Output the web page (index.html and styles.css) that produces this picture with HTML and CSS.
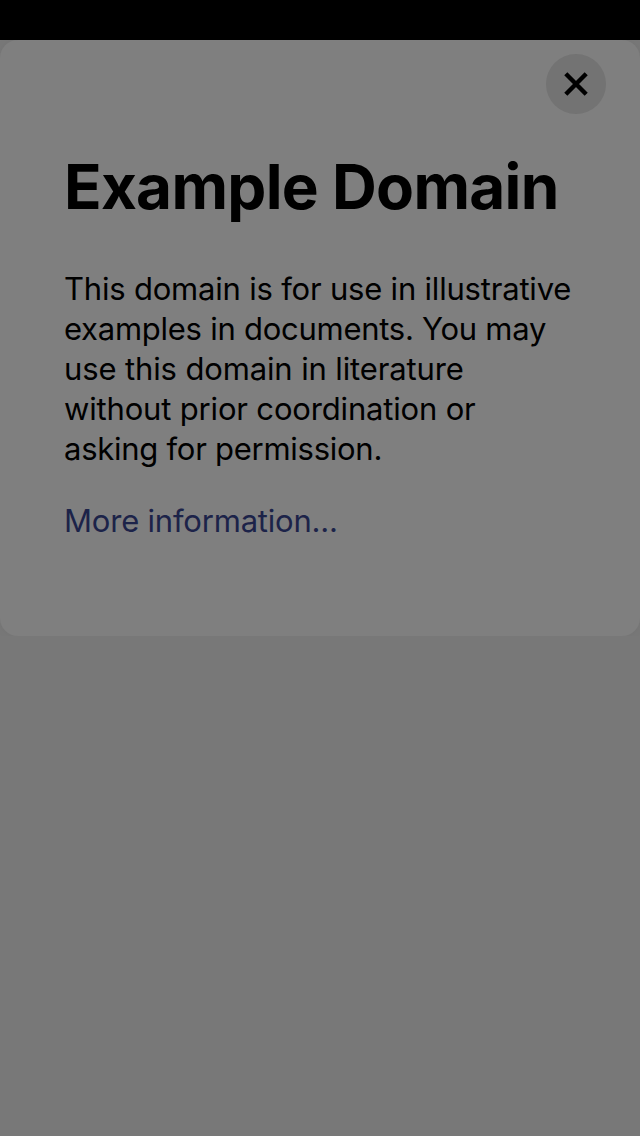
FILE: index.html
```html
<!DOCTYPE html>
<html lang="en">
<head>
<meta charset="utf-8">
<title>Example Domain</title>
<link rel="stylesheet" href="styles.css">
</head>
<body>
<div class="status-bar"></div>
<main class="card">
  <button class="close" aria-label="Close"><svg viewBox="0 0 60 60" width="60" height="60"><path d="M19.8 19.8 40.2 40.2M40.2 19.8 19.8 40.2"/></svg></button>
  <h1 class="title">Example Domain</h1>
  <p class="text"><span class="l1">This domain is for use in illustrative</span><br><span class="l2">examples in documents. You may</span><br><span class="l3">use this domain in literature</span><br><span class="l4">without prior coordination or</span><br><span class="l5">asking for permission.</span></p>
  <a class="more" href="#">More information...</a>
</main>
</body>
</html>
```
FILE: styles.css
```css
body { margin: 0; background: #787878; font-family: Inter, sans-serif; color: #000; }
.status-bar { height: 40px; background: #000; }
.card { box-sizing: border-box; height: 596px; padding: 14px 34px 0 64px; background: #7f7f7f; border-radius: 18px; box-shadow: 0 0 12px rgba(0,0,0,.04); }
.close { display: block; width: 60px; height: 60px; margin: 0 0 0 auto; padding: 0; border: 0; border-radius: 50%; background: #737373; }
.close svg { display: block; fill: none; stroke: #000; stroke-width: 4.4; }
.title { margin: 33px 0 0; font-size: 62px; line-height: 80px; font-weight: 700; letter-spacing: -.7px; white-space: nowrap; }
.text { margin: 42px 0 0; font-size: 31px; line-height: 40px; white-space: nowrap; letter-spacing: -.2px; }
.l2 { letter-spacing: -.26px; }
.l3 { letter-spacing: -.13px; }
.l4 { letter-spacing: -.17px; }
.l5 { letter-spacing: -.26px; }
.more { display: block; margin-top: 32px; font-size: 31px; line-height: 40px; letter-spacing: -.2px; color: #1c2349; text-decoration: none; }
```
